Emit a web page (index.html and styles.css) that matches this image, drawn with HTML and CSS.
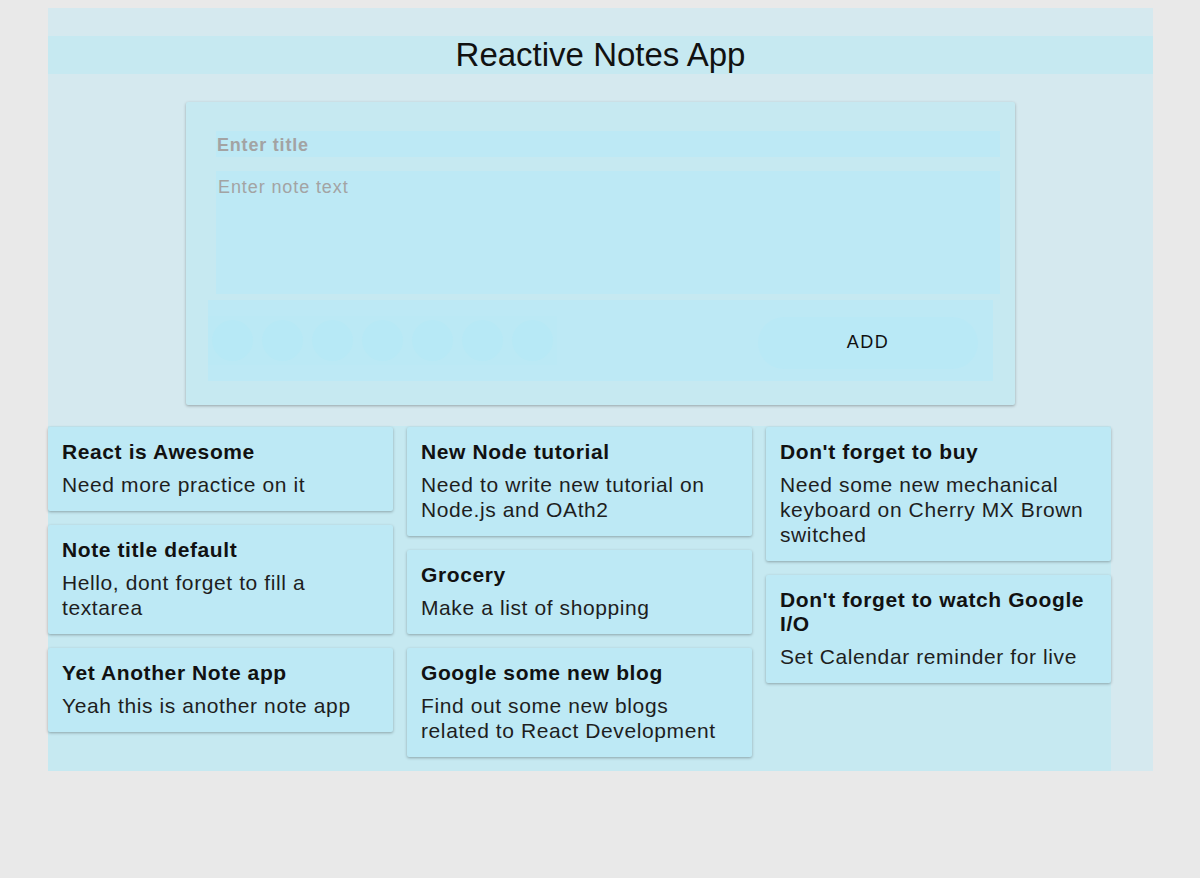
FILE: index.html
```html
<!DOCTYPE html>
<html lang="en">
<head>
<meta charset="utf-8">
<title>Reactive Notes App</title>
<link rel="stylesheet" href="styles.css">
</head>
<body>
<div class="app">
  <h1 class="app-title">Reactive Notes App</h1>
  <form class="editor">
    <input class="editor-title" type="text" placeholder="Enter title">
    <textarea class="editor-text" placeholder="Enter note text"></textarea>
    <div class="editor-bar">
      <div class="colors">
        <span class="swatch"></span>
        <span class="swatch"></span>
        <span class="swatch"></span>
        <span class="swatch"></span>
        <span class="swatch"></span>
        <span class="swatch"></span>
        <span class="swatch"></span>
      </div>
      <button class="add-btn" type="button">ADD</button>
    </div>
  </form>
  <div class="notes">
    <div class="col">
      <div class="note"><div class="note-title">React is Awesome</div><div class="note-text">Need more practice on it</div></div>
      <div class="note"><div class="note-title">Note title default</div><div class="note-text">Hello, dont forget to fill a textarea</div></div>
      <div class="note"><div class="note-title">Yet Another Note app</div><div class="note-text">Yeah this is another note app</div></div>
    </div>
    <div class="col">
      <div class="note"><div class="note-title">New Node tutorial</div><div class="note-text">Need to write new tutorial on Node.js and OAth2</div></div>
      <div class="note"><div class="note-title">Grocery</div><div class="note-text">Make a list of shopping</div></div>
      <div class="note"><div class="note-title">Google some new blog</div><div class="note-text">Find out some new blogs related to React Development</div></div>
    </div>
    <div class="col">
      <div class="note"><div class="note-title">Don't forget to buy</div><div class="note-text">Need some new mechanical keyboard on Cherry MX Brown switched</div></div>
      <div class="note"><div class="note-title">Don't forget to watch Google I/O</div><div class="note-text">Set Calendar reminder for live</div></div>
    </div>
  </div>
</div>
</body>
</html>
```
FILE: styles.css
```css
html, body {
  margin: 0;
  padding: 0;
}
body {
  background: #e9e9e9;
  padding: 8px 0 0 48px;
  font-family: "Liberation Sans", Arial, sans-serif;
  color: #111;
}
.app {
  width: 1105px;
  background: #d5e9ef;
  padding-top: 28px;
}
.app-title {
  margin: 0;
  height: 38px;
  line-height: 38px;
  background: #c6e9f1;
  text-align: center;
  font-size: 33px;
  font-weight: normal;
  color: #111;
}
.editor {
  width: 799px;
  margin: 28px auto 0;
  background: #c6e9f1;
  border-radius: 2px;
  box-shadow: 0 1px 3px rgba(0, 0, 0, 0.3);
  padding: 29px 15px 24px 15px;
  display: flex;
  flex-direction: column;
  box-sizing: content-box;
}
.editor-title,
.editor-text {
  display: block;
  margin: 0 0 0 15px;
  width: 784px;
  border: none;
  outline: none;
  background: #bde9f5;
  font-family: "Liberation Sans", Arial, sans-serif;
  font-size: 18px;
  letter-spacing: 0.8px;
  color: #333;
  box-sizing: border-box;
  padding: 0 1px;
}
.editor-title {
  height: 26px;
  padding-top: 2px;
  font-weight: bold;
}
.editor-title::placeholder {
  color: #a3a3a3;
}
.editor-text {
  height: 123px;
  margin-top: 14px;
  padding: 6px 2px 0;
  letter-spacing: 0.9px;
  resize: none;
}
.editor-text::placeholder {
  color: #a3a3a3;
}
.editor-bar {
  margin-top: 6px;
  margin-left: 7px;
  width: 785px;
  height: 81px;
  background: #bde9f5;
  display: flex;
  align-items: center;
  justify-content: space-between;
}
.colors {
  width: 349px;
  height: 49px;
  display: flex;
  align-items: center;
  gap: 9px;
  padding-left: 4px;
  box-sizing: border-box;
  background: #bbe9f5;
}
.swatch {
  width: 41px;
  height: 41px;
  border-radius: 50%;
  background: #b7e9f6;
}
.add-btn {
  width: 220px;
  height: 52px;
  margin-right: 15px;
  margin-top: 4px;
  border: none;
  border-radius: 26px;
  background: #b9e9f6;
  font-family: "Liberation Sans", Arial, sans-serif;
  font-size: 18px;
  letter-spacing: 1.5px;
  color: #111;
}
.notes {
  width: 1063px;
  margin-top: 21px;
  padding: 1px 0 14px;
  background: #c6e9f1;
  display: flex;
  gap: 14px;
  align-items: flex-start;
}
.col {
  width: 345px;
  display: flex;
  flex-direction: column;
  gap: 14px;
}
.note {
  background: #bde9f5;
  border-radius: 2px;
  box-shadow: 0 1px 3px rgba(0, 0, 0, 0.3);
  padding: 13px 14px 14px;
}
.note-title {
  font-weight: bold;
  font-size: 21px;
  letter-spacing: 0.6px;
  line-height: 24px;
  color: #111;
  margin-bottom: 8px;
}
.note-text {
  font-size: 21px;
  letter-spacing: 0.6px;
  line-height: 25px;
  color: #1e1e1e;
}
```
